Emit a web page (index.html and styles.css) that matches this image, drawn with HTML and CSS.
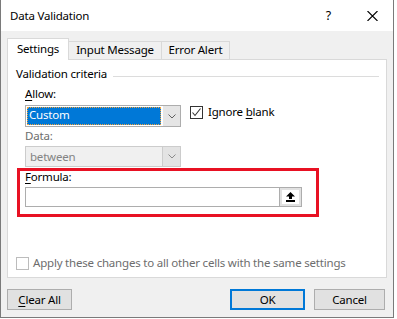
FILE: index.html
```html
<!DOCTYPE html>
<html>
<head>
    <title>Data Validation</title>
    <link rel="stylesheet" href="styles.css">
</head>
<body>
    <div class="window">
        <!-- Title bar -->
        <div class="titlebar">
            <span class="title">Data Validation</span>
            <span class="help">?</span>
            <svg class="close" width="11" height="10" viewBox="0 0 11 10">
                <path d="M0.5 0 L10.5 10 M10.5 0 L0.5 10" stroke="#000" stroke-width="1.1" fill="none"/>
            </svg>
        </div>

        <div class="body">
            <!-- Tabs -->
            <div class="tabs">
                <div class="tab active tab-settings">Settings</div>
                <div class="tab tab-input">Input Message</div>
                <div class="tab tab-error">Error Alert</div>
            </div>

            <!-- Settings page -->
            <div class="panel">
                <div class="legend">
                    <span>Validation criteria</span>
                    <span class="rule"></span>
                </div>

                <div class="criteria">
                    <div class="label label-allow"><u>A</u>llow:</div>
                    <div class="row">
                        <div class="combo">
                            <div class="field"><span class="selected">Custom</span></div>
                            <div class="drop">
                                <svg width="8" height="5" viewBox="0 0 8 5"><path d="M0.5 0.5 L4 4 L7.5 0.5" stroke="#606060" fill="none"/></svg>
                            </div>
                        </div>
                        <div class="check">
                            <span class="box">
                                <svg width="11" height="11" viewBox="0 0 11 11"><path d="M1.5 5.5 L4 8.5 L9.5 1.5" stroke="#333" stroke-width="1.1" fill="none"/></svg>
                            </span>
                            <span>Ignore <u>b</u>lank</span>
                        </div>
                    </div>

                    <div class="label label-data disabled">Data:</div>
                    <div class="combo combo-disabled">
                        <div class="field"><span class="value">between</span></div>
                        <div class="drop">
                            <svg width="8" height="5" viewBox="0 0 8 5"><path d="M0.5 0.5 L4 4 L7.5 0.5" stroke="#8a8a8a" fill="none"/></svg>
                        </div>
                    </div>

                    <div class="formula-box">
                        <div class="label label-formula"><u>F</u>ormula:</div>
                        <div class="formula">
                            <div class="ref-btn">
                                <span class="ref-icon">
                                    <svg width="9" height="10" viewBox="0 0 9 10">
                                        <path d="M4.5 0 L9 4.5 L6 4.5 L6 7 L3 7 L3 4.5 L0 4.5 Z" fill="#000"/>
                                        <rect x="0" y="8" width="9" height="2" fill="#000"/>
                                    </svg>
                                </span>
                            </div>
                        </div>
                    </div>
                </div>

                <div class="apply">
                    <span class="box box-disabled"></span>
                    <span>Apply these changes to all other cells with the same settings</span>
                </div>
            </div>

            <!-- Buttons -->
            <div class="footer">
                <button class="btn btn-clear"><u>C</u>lear All</button>
                <span class="spacer"></span>
                <button class="btn btn-ok">OK</button>
                <button class="btn btn-cancel">Cancel</button>
            </div>
        </div>
    </div>
</body>
</html>
```

FILE: styles.css
```css
* { box-sizing: border-box; }
body {
    margin: 0;
    background: #fff;
    font-family: "Noto Sans", sans-serif;
    font-size: 11.5px;
    letter-spacing: -0.2px;
    line-height: 16px;
    color: #000;
}
u { text-decoration: underline; text-underline-offset: 2px; }

.window {
    width: 394px;
    height: 318px;
    border: 1px solid #7a7a7a;
    border-top: 0;
    background: #f0f0f0;
}

/* title bar */
.titlebar {
    height: 31px;
    background: #fff;
    display: flex;
    align-items: center;
    padding: 0 15px 0 9px;
}
.help { margin-left: auto; font-size: 12.5px; }
.close { margin-left: 36px; }

.body { padding: 7px 6px 0; }

/* tabs */
.tabs { display: flex; align-items: flex-end; height: 21px; }
.tab {
    height: 18px;
    border: 1px solid #d9d9d9;
    border-left: 0;
    border-bottom: 0;
    text-align: center;
}
.tab.active {
    height: 22px;
    margin-bottom: -1px;
    padding-top: 2px;
    background: #fff;
    border-left: 1px solid #d9d9d9;
    position: relative;
    z-index: 1;
}
.tab-settings { width: 62px; }
.tab-input { width: 93px; }
.tab-error { width: 68px; }

.panel {
    height: 219px;
    background: #fff;
    border: 1px solid #d9d9d9;
    padding: 6px 7px 0 8px;
}

.legend { display: flex; }
.legend .rule {
    flex: 1;
    height: 1px;
    margin: 10px 0 0 6px;
    background: #dcdcdc;
}

.criteria { padding-left: 9px; }
.label { white-space: nowrap; }
.label-allow { margin-top: 4px; }
.label-data { margin-top: 1px; }
.disabled { color: #6d6d6d; }

.row { display: flex; margin-top: 3px; }

/* combo boxes */
.combo {
    display: flex;
    width: 156px;
    height: 22px;
    border: 1px solid #adadad;
    background: #fff;
}
.combo .field { flex: 1; padding: 1px 1px 0 1px; }
.selected {
    display: block;
    height: 18px;
    padding-left: 2px;
    line-height: 16px;
    background: #0078d7;
    color: #fff;
    outline: 1px dotted #f2a33a;
    outline-offset: -1px;
}
.combo .drop {
    width: 18px;
    display: flex;
    align-items: center;
    justify-content: center;
    background: #e5e5e5;
    border-left: 1px solid #fff;
}
.combo-disabled {
    height: 21px;
    margin-top: 2px;
    border-color: #cccccc;
    background: #f0f0f0;
}
.combo-disabled .value { display: block; padding: 1px 0 0 3px; color: #838383; }
.combo-disabled .drop { background: #e3e3e3; border-left: 1px solid #cccccc; }

/* check boxes */
.check { display: flex; margin: -1px 0 0 9px; }
.box {
    width: 13px;
    height: 13px;
    margin: 2px 5px 0 0;
    border: 1px solid #333;
    background: #fff;
    display: flex;
    align-items: center;
    justify-content: center;
}
.box-disabled { border-color: #bcbcbc; margin-right: 4px; }

/* formula */
.formula-box {
    width: 302px;
    margin: 1px 0 0 -8px;
    border: 3px solid #e81123;
    padding: 0 0 7px 5px;
}
.label-formula { line-height: 12px; }
.formula {
    width: 277px;
    height: 20px;
    margin-top: 4px;
    border: 1px solid #adadad;
    background: #fff;
    display: flex;
    justify-content: flex-end;
}
.ref-btn {
    width: 22px;
    padding: 2px;
    background: #e1e1e1;
    border-left: 1px solid #adadad;
    display: flex;
}
.ref-icon {
    flex: 1;
    background: #fff;
    display: flex;
    align-items: center;
    justify-content: center;
}

.apply { display: flex; margin-top: 38px; color: #6d6d6d; }

/* buttons */
.footer { display: flex; padding: 11px 2px 0 0; }
.spacer { flex: 1; }
.btn {
    height: 21px;
    padding: 0;
    font: inherit;
    letter-spacing: inherit;
    color: #000;
    background: #e1e1e1;
    border: 1px solid #adadad;
}
.btn-clear { width: 65px; }
.btn-ok { width: 75px; border: 2px solid #0078d7; }
.btn-cancel { width: 71px; margin-left: 9px; }
```
